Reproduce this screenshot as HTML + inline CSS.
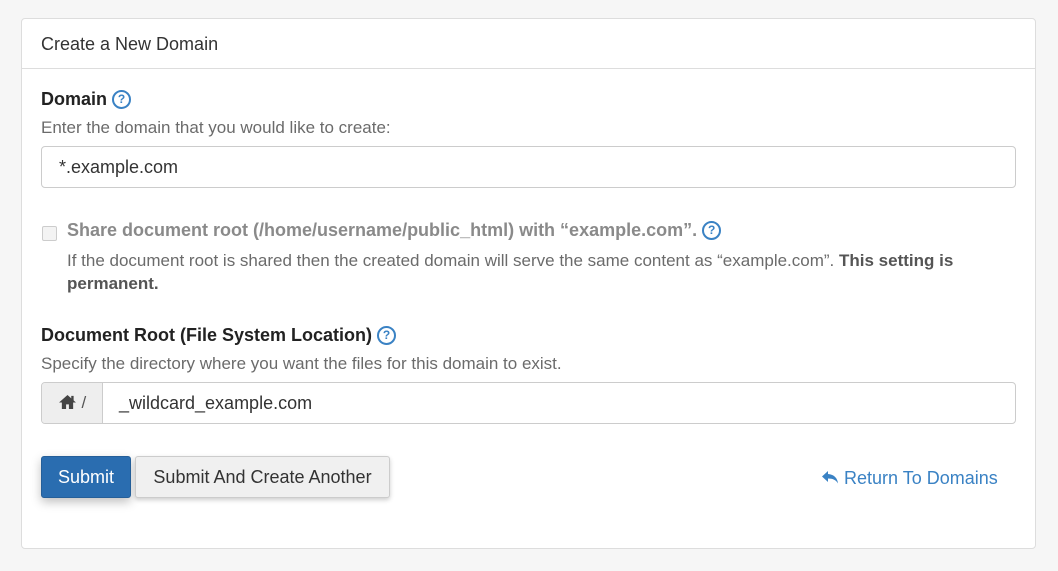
<!DOCTYPE html>
<html><head><meta charset="utf-8"><style>
body{margin:0;background:#f6f6f6;width:1058px;height:571px;overflow:hidden;font-family:"Liberation Sans",Arial,sans-serif;color:#333;position:relative}
.panel{position:absolute;left:21px;top:18px;width:1013px;height:529px;background:#fff;border:1px solid #ddd;border-radius:4px}
.hdr{position:absolute;left:0;top:0;right:0;height:49px;border-bottom:1px solid #ddd;font-size:18px;line-height:50px;padding-left:19px;color:#333}
.a{position:absolute;white-space:nowrap}
.lbl{font-size:18px;font-weight:bold;color:#222}
.help{font-size:17px;color:#6b6b6b}
.q{display:inline-block;width:15px;height:15px;border:2px solid #3a82c4;border-radius:50%;color:#3a82c4;font-size:12px;font-weight:bold;text-align:center;line-height:15px;vertical-align:2px;margin-left:5px}
.inp{position:absolute;border:1px solid #ccc;border-radius:4px;background:#fff;font-size:18px;color:#333;line-height:40px;box-sizing:border-box;height:42px}
</style></head><body>
<div class="panel">
<div class="hdr">Create a New Domain</div>
<div class="a lbl" style="left:19px;top:70px">Domain<span class="q">?</span></div>
<div class="a help" style="left:19px;top:99px">Enter the domain that you would like to create:</div>
<div class="inp" style="left:19px;top:127px;width:975px;padding-left:17px">*.example.com</div>
<div class="a" style="left:20px;top:207px;width:13px;height:13px;border:1px solid #ccc;border-radius:2px;background:#f3f3f3"></div>
<div class="a" style="left:45px;top:201px;font-size:18px;font-weight:bold;color:#8a8a8a">Share document root (/home/username/public_html) with “example.com”.<span class="q">?</span></div>
<div class="a help" style="left:45px;top:230px;line-height:23px">If the document root is shared then the created domain will serve the same content as “example.com”. <b style="color:#555">This setting is</b><br><b style="color:#555">permanent.</b></div>
<div class="a lbl" style="left:19px;top:306px">Document Root (File System Location)<span class="q">?</span></div>
<div class="a help" style="left:19px;top:335px">Specify the directory where you want the files for this domain to exist.</div>
<div class="inp" style="left:19px;top:363px;width:975px;overflow:hidden">
<div style="position:absolute;left:0;top:0;width:60px;height:40px;background:#eee;border-right:1px solid #ccc;font-size:17px;color:#555;text-align:center">
<svg width="19" height="16" viewBox="0 0 20 17" style="vertical-align:-2px"><path d="M10 1L1 9h3v7h4.5v-5h3v5H16V9h3z" fill="#444"/><rect x="14" y="2" width="2.5" height="5" fill="#444"/></svg> /</div>
<div style="position:absolute;left:77px;top:0">_wildcard_example.com</div></div>
<div class="a" style="left:19px;top:437px;width:88px;height:40px;background:#2a6db0;border:1px solid #255f99;border-radius:3px;color:#fff;font-size:18px;text-align:center;line-height:40px;box-shadow:0 4px 10px rgba(0,0,0,.25)">Submit</div>
<div class="a" style="left:113px;top:437px;width:253px;height:40px;background:#f0f0f0;border:1px solid #ccc;border-radius:3px;color:#333;font-size:18px;text-align:center;line-height:40px;box-shadow:0 2px 5px rgba(0,0,0,.2)">Submit And Create Another</div>
<div class="a" style="left:799px;top:449px;font-size:18px;color:#3a82c4"><svg width="18" height="15" viewBox="0 0 18 15" style="vertical-align:-1px"><path d="M7 1L1 6.5 7 12V8.5c5 0 8 1.5 10 5-0.5-5-3.5-9-10-9.5z" fill="#3a82c4"/></svg> Return To Domains</div>
</div>
</body></html>
